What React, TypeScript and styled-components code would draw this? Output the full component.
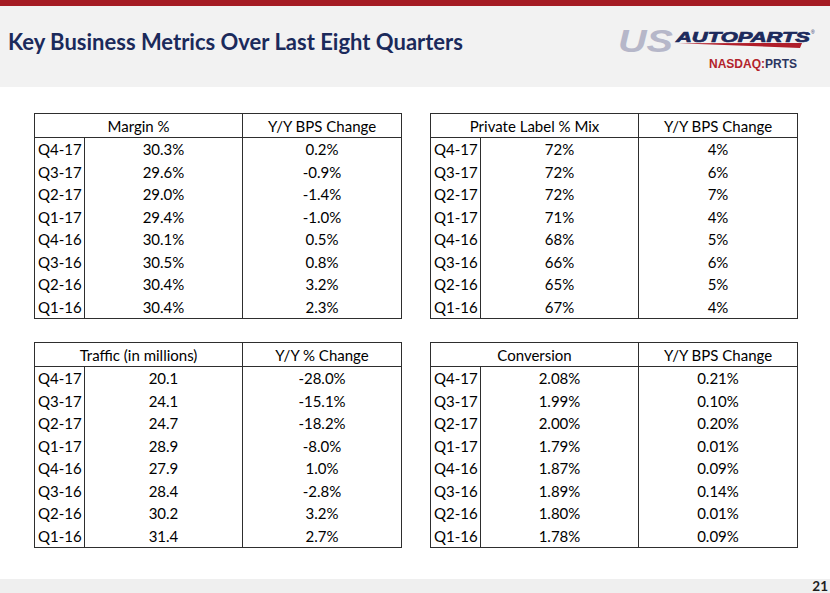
import React from "react";
import styled, { createGlobalStyle } from "styled-components";

const GlobalStyle = createGlobalStyle`
  html, body { margin: 0; padding: 0; background: #ffffff; }
  body { width: 830px; height: 593px; overflow: hidden; font-family: Lato, "Open Sans", sans-serif; }
  #root { width: 830px; height: 593px; }
`;

const Page = styled.div`
  width: 830px;
  height: 593px;
  display: flex;
  flex-direction: column;
  background: #ffffff;
`;

const Header = styled.header`
  box-sizing: border-box;
  height: 87px;
  border-top: 6px solid #a51c24;
  background: #f2f2f2;
  display: flex;
  justify-content: space-between;
  align-items: flex-start;
`;

const Title = styled.h1`
  margin: 22px 0 0 8px;
  font-family: Lato, sans-serif;
  font-weight: 700;
  font-size: 22px;
  line-height: 28px;
  color: #1b2a5b;
`;

const LogoBlock = styled.div`
  margin: 13px 12px 0 0;
  display: flex;
  flex-direction: column;
  align-items: flex-end;
`;

const LogoSvg = styled.svg`
  display: block;
  overflow: visible;
`;

const Nasdaq = styled.div`
  margin: 5px 21px 0 0;
  font-family: "Liberation Sans", Arial, sans-serif;
  font-weight: 700;
  font-size: 12px;
  line-height: 12px;
  color: #b3232b;
`;

const Ticker = styled.span`
  color: #2b3560;
`;

const Main = styled.main`
  flex: 1;
  padding: 26px 0 0 34px;
  display: grid;
  grid-template-columns: 367px 367px;
  grid-auto-rows: min-content;
  column-gap: 29px;
  row-gap: 23px;
`;

const Table = styled.table`
  width: 367px;
  table-layout: fixed;
  border-collapse: collapse;
  border: 1px solid #2e2e2e;
  font-family: Lato, sans-serif;
  font-size: 15px;
  color: #000;
`;

const HeadCell = styled.th`
  height: 23px;
  padding: 0;
  font-weight: 400;
  text-align: center;
  border-bottom: 1px solid #2e2e2e;
  border-right: 1px solid #2e2e2e;
  line-height: 18px;
`;

const Cell = styled.td<{ $quarter?: boolean }>`
  height: 22.5px;
  padding: ${(p) => (p.$quarter ? "0 0 0 3px" : "0")};
  text-align: ${(p) => (p.$quarter ? "left" : "center")};
  border-right: 1px solid #2e2e2e;
  line-height: 18px;
  white-space: nowrap;
`;

const Footer = styled.footer`
  height: 14px;
  background: #efefef;
  text-align: right;
  padding-right: 2px;
  font-family: Lato, sans-serif;
  font-weight: 700;
  font-size: 13.5px;
  line-height: 14px;
  color: #1e1e1e;
`;

type Metric = {
  title: string;
  change: string;
  rows: [string, string, string][];
};

const quarters = ["Q4-17", "Q3-17", "Q2-17", "Q1-17", "Q4-16", "Q3-16", "Q2-16", "Q1-16"];

const build = (vals: string[], chg: string[]): [string, string, string][] =>
  quarters.map((q, i) => [q, vals[i], chg[i]]);

const metrics: Metric[] = [
  {
    title: "Margin %",
    change: "Y/Y BPS Change",
    rows: build(
      ["30.3%", "29.6%", "29.0%", "29.4%", "30.1%", "30.5%", "30.4%", "30.4%"],
      ["0.2%", "-0.9%", "-1.4%", "-1.0%", "0.5%", "0.8%", "3.2%", "2.3%"]
    ),
  },
  {
    title: "Private Label % Mix",
    change: "Y/Y BPS Change",
    rows: build(
      ["72%", "72%", "72%", "71%", "68%", "66%", "65%", "67%"],
      ["4%", "6%", "7%", "4%", "5%", "6%", "5%", "4%"]
    ),
  },
  {
    title: "Traffic (in millions)",
    change: "Y/Y % Change",
    rows: build(
      ["20.1", "24.1", "24.7", "28.9", "27.9", "28.4", "30.2", "31.4"],
      ["-28.0%", "-15.1%", "-18.2%", "-8.0%", "1.0%", "-2.8%", "3.2%", "2.7%"]
    ),
  },
  {
    title: "Conversion",
    change: "Y/Y BPS Change",
    rows: build(
      ["2.08%", "1.99%", "2.00%", "1.79%", "1.87%", "1.89%", "1.80%", "1.78%"],
      ["0.21%", "0.10%", "0.20%", "0.01%", "0.09%", "0.14%", "0.01%", "0.09%"]
    ),
  },
];

const MetricTable: React.FC<{ m: Metric }> = ({ m }) => (
  <Table>
    <colgroup>
      <col style={{ width: 50 }} />
      <col style={{ width: 158 }} />
      <col style={{ width: 159 }} />
    </colgroup>
    <thead>
      <tr>
        <HeadCell colSpan={2}>{m.title}</HeadCell>
        <HeadCell>{m.change}</HeadCell>
      </tr>
    </thead>
    <tbody>
      {m.rows.map(([q, v, c]) => (
        <tr key={q}>
          <Cell $quarter>{q}</Cell>
          <Cell>{v}</Cell>
          <Cell>{c}</Cell>
        </tr>
      ))}
    </tbody>
  </Table>
);

const Logo: React.FC = () => (
  <LogoSvg width="204" height="34" viewBox="0 0 204 34">
    <text
      x="4"
      y="33"
      fontFamily="Liberation Sans, Arial, sans-serif"
      fontStyle="italic"
      fontWeight="700"
      fontSize="31"
      fill="#b6b7c9"
      textLength="55"
      lengthAdjust="spacingAndGlyphs"
    >
      US
    </text>
    <path d="M64 24.2 L188 24 L186 29 Z" fill="#b01e2a" />
    <text
      x="62"
      y="23"
      fontFamily="Liberation Sans, Arial, sans-serif"
      fontStyle="italic"
      fontWeight="700"
      fontSize="14.5"
      fill="#1c2a5c"
      stroke="#1c2a5c"
      strokeWidth="0.7"
      textLength="134"
      lengthAdjust="spacingAndGlyphs"
    >
      AUTOPARTS
    </text>
    <text x="197" y="15" fontFamily="Liberation Sans, Arial, sans-serif" fontSize="5" fill="#1c2a5c">
      ®
    </text>
  </LogoSvg>
);

export default function App() {
  return (
    <>
      <GlobalStyle />
      <Page>
        <Header>
          <Title>Key Business Metrics Over Last Eight Quarters</Title>
          <LogoBlock>
            <Logo />
            <Nasdaq>
              NASDAQ:<Ticker>PRTS</Ticker>
            </Nasdaq>
          </LogoBlock>
        </Header>
        <Main>
          {metrics.map((m) => (
            <MetricTable key={m.title} m={m} />
          ))}
        </Main>
        <Footer>21</Footer>
      </Page>
    </>
  );
}
